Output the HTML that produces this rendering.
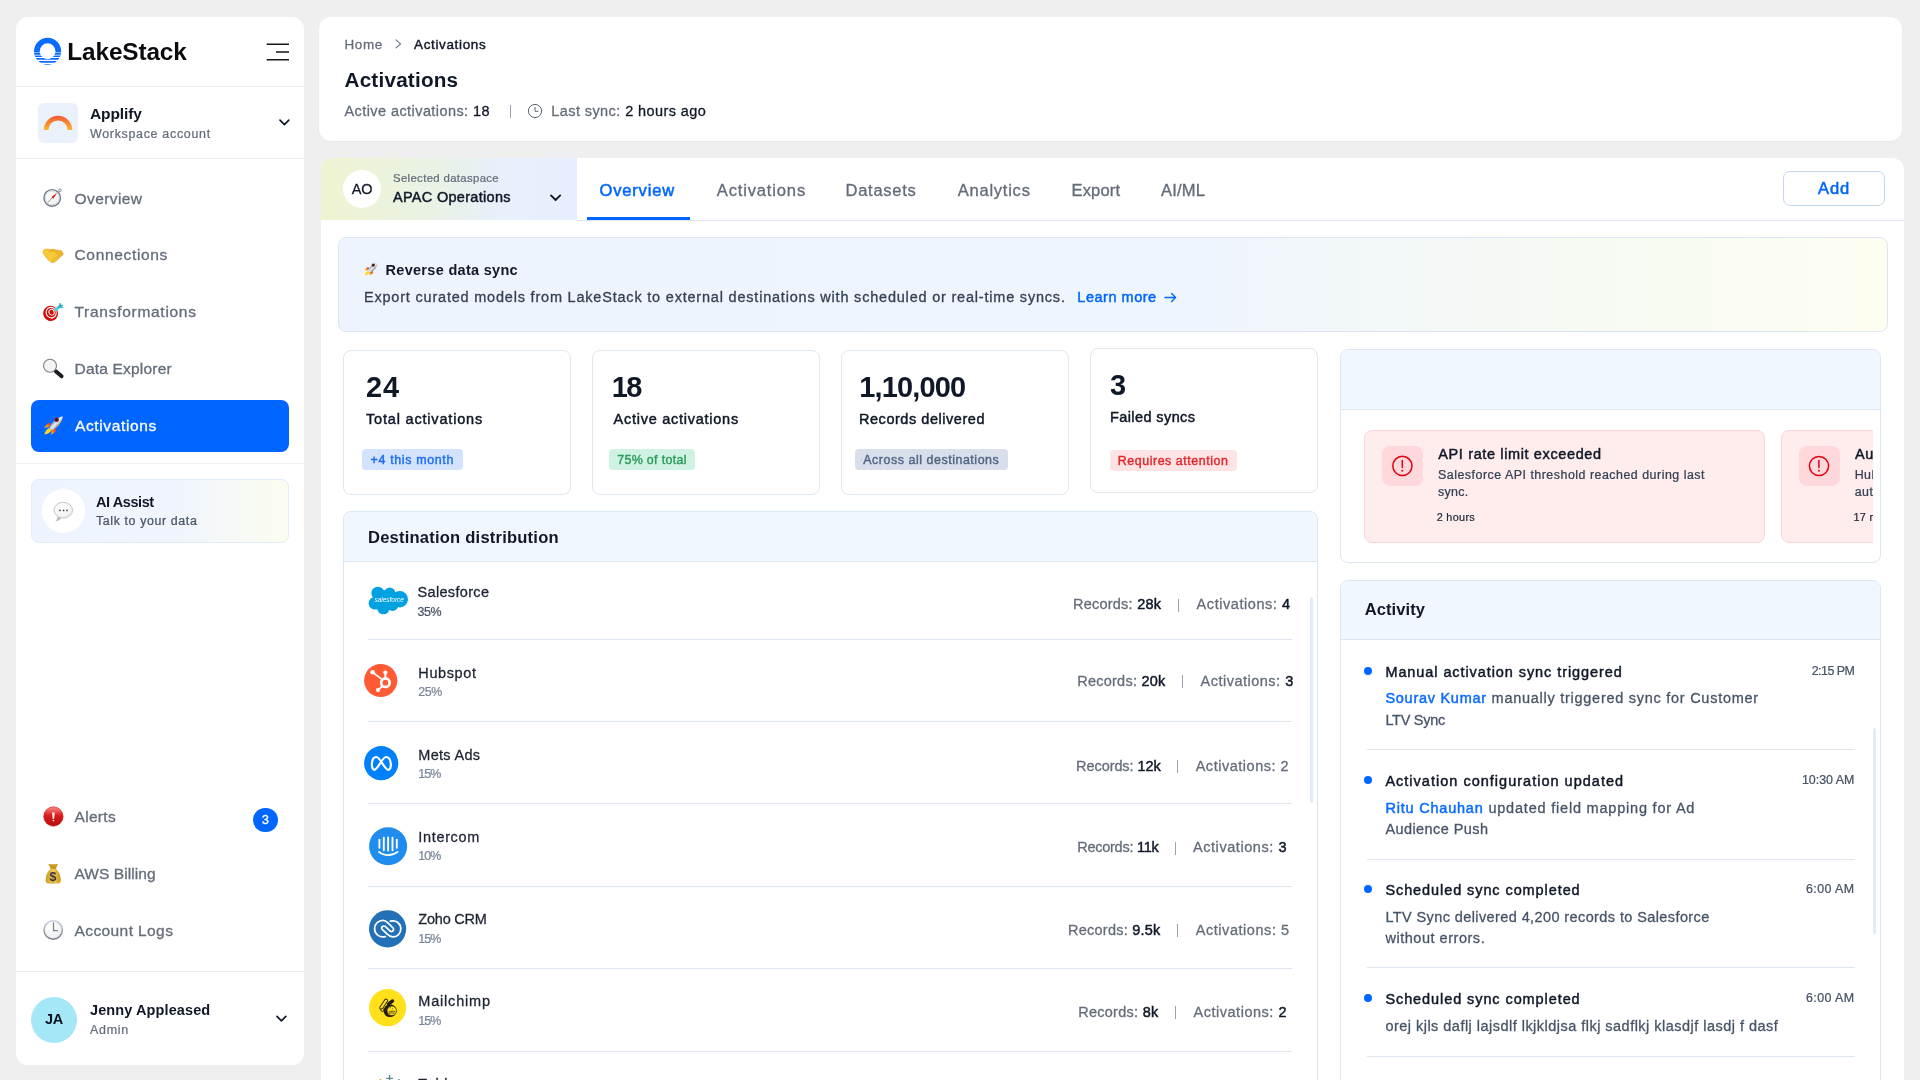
<!DOCTYPE html>
<html lang="en"><head><meta charset="utf-8"><title>Activations - LakeStack</title>
<style>
html,body{margin:0;padding:0;}
body{width:1920px;height:1080px;overflow:hidden;background:#efefef;font-family:"Liberation Sans",sans-serif;}
#root{will-change:transform;position:relative;width:1920px;height:1080px;overflow:hidden;}
.a{position:absolute;}
.t{white-space:nowrap;}
svg{display:block;overflow:visible;}

</style></head>
<body>
<div id="root">
<div class="a" style="left:16px;top:17px;width:288px;height:1048px;background:#fff;border-radius:12px;"></div>
<svg class="a" style="left:33px;top:37px;" width="30" height="30" viewBox="0 0 30 30"><defs><clipPath id="lk"><rect x="0" y="0" width="30" height="14.9"/><rect x="0" y="15.9" width="30" height="1.7"/><rect x="0" y="19" width="30" height="0.9"/><rect x="0" y="21.1" width="30" height="1.7"/><rect x="0" y="24" width="30" height="1.7"/><rect x="0" y="27" width="30" height="1"/></clipPath>
<clipPath id="lk2"><rect x="0" y="14.9" width="30" height="5"/></clipPath></defs>
<path id="lkr" clip-path="url(#lk2)" fill-rule="evenodd" fill="#0a6cff" opacity="0.5" d="M14.6 0.7a13.55 13.55 0 1 0 0 27.1a13.55 13.55 0 1 0 0-27.1zM14.6 6.35a7.9 7.9 0 1 1 0 15.8a7.9 7.9 0 1 1 0-15.8z"/>
<path clip-path="url(#lk)" fill-rule="evenodd" fill="#0a6cff" d="M14.6 0.7a13.55 13.55 0 1 0 0 27.1a13.55 13.55 0 1 0 0-27.1zM14.6 6.35a7.9 7.9 0 1 1 0 15.8a7.9 7.9 0 1 1 0-15.8z"/></svg>
<svg class="a" style="left:266px;top:42px;" width="24" height="20" viewBox="0 0 24 20"><path d="M0.7 2.2H23M10 10H23M0.7 17.7H23" stroke="#14161c" stroke-width="1.6" fill="none"/></svg>
<div class="a" style="left:16px;top:86px;width:288px;height:1px;background:#ededed;"></div>
<div class="a" style="left:38px;top:103px;width:40px;height:40px;background:#eaf1fb;border-radius:6px;"></div>
<svg class="a" style="left:38px;top:103px;" width="40" height="40" viewBox="0 0 40 40"><defs><linearGradient id="ag" x1="0" y1="0" x2="0" y2="1"><stop offset="0" stop-color="#f0593a"/><stop offset="1" stop-color="#fdb52a"/></linearGradient></defs>
<path d="M5.8 27a14.2 14.2 0 0 1 28.4 0h-4.6a9.6 9.6 0 0 0-19.2 0z" fill="url(#ag)"/></svg>
<svg class="a" style="left:279px;top:119px;" width="11" height="7" viewBox="0 0 11 7"><path d="M1 1.2L5.4 5.6L9.8 1.2" stroke="#101828" stroke-width="1.7" fill="none" stroke-linecap="round" stroke-linejoin="round"/></svg>
<div class="a" style="left:16px;top:158px;width:288px;height:1px;background:#ededed;"></div>
<div class="a" style="left:31px;top:400px;width:258px;height:52px;background:#0066ff;border-radius:8px;"></div>
<div class="a" style="left:16px;top:463px;width:288px;height:1px;background:#f0f0f0;"></div>
<div class="a" style="left:31px;top:479px;width:258px;height:64px;border-radius:8px;border:1px solid #e1ecfb;box-sizing:border-box;background:linear-gradient(90deg,#eef4ff 0%,#f0f5fd 55%,#fbfdf0 100%);"></div>
<div class="a" style="left:41.7px;top:489.2px;width:43.8px;height:43.8px;background:#fff;border-radius:22px;"></div>
<div class="a" style="left:253.4px;top:808px;width:24.2px;height:24.2px;background:#0066ff;border-radius:13px;"></div>
<div class="a" style="left:16px;top:971px;width:288px;height:1px;background:#ededed;"></div>
<div class="a" style="left:31px;top:996.5px;width:46px;height:46px;background:#a6e7f7;border-radius:23px;"></div>
<svg class="a" style="left:276px;top:1015px;" width="11" height="8" viewBox="0 0 11 8"><path d="M1 1.4L5.4 5.8L9.8 1.4" stroke="#101828" stroke-width="1.7" fill="none" stroke-linecap="round" stroke-linejoin="round"/></svg>
<div class="a" style="left:319px;top:17px;width:1583px;height:124px;background:#fff;border-radius:12px;box-shadow:0 1px 2px rgba(0,0,0,0.04);"></div>
<svg class="a" style="left:395px;top:39px;" width="7" height="10" viewBox="0 0 7 10"><path d="M1 0.8L5.6 4.8L1 8.8" stroke="#667085" stroke-width="1.1" fill="none" stroke-linecap="round" stroke-linejoin="round"/></svg>
<div class="a" style="left:509.5px;top:105px;width:1px;height:13px;background:#98a2b3;"></div>
<svg class="a" style="left:527px;top:103px;" width="16" height="16" viewBox="0 0 16 16"><circle cx="8" cy="8" r="6.6" stroke="#5b6472" stroke-width="1" fill="none"/><path d="M8 4.4V8.3H11" stroke="#5b6472" stroke-width="1" fill="none" stroke-linecap="round" stroke-linejoin="round"/></svg>
<div class="a" style="left:321px;top:157.5px;width:1583px;height:940px;background:#fff;border-radius:12px;"></div>
<div class="a" style="left:321px;top:157.5px;width:255.5px;height:62px;border-radius:12px 0 0 0;background:linear-gradient(90deg,#eef4d0 0%,#eaf2e6 45%,#e7f0fb 70%,#e6effe 100%);"></div>
<div class="a" style="left:343px;top:170px;width:38px;height:38px;background:#fff;border-radius:19px;"></div>
<svg class="a" style="left:550px;top:193.5px;" width="12" height="8" viewBox="0 0 12 8"><path d="M1 1.4L5.6 6L10.2 1.4" stroke="#101828" stroke-width="1.8" fill="none" stroke-linecap="round" stroke-linejoin="round"/></svg>
<div class="a" style="left:576.5px;top:220px;width:1327.5px;height:1px;background:#dde5ee;"></div>
<div class="a" style="left:587px;top:217px;width:102.7px;height:3.3px;background:#0066ff;"></div>
<div class="a" style="left:1783px;top:170.5px;width:101.5px;height:35px;background:#fff;border-radius:7px;border:1px solid #c5d6f2;box-sizing:border-box;"></div>
<div class="a" style="left:338px;top:237px;width:1549.5px;height:94.5px;border-radius:8px;border:1px solid #dbe6f7;box-sizing:border-box;background:linear-gradient(90deg,#eef4fe 0%,#eff5fd 55%,#f6faf3 80%,#fdfef0 100%);"></div>
<svg class="a" style="left:1164px;top:292px;" width="13" height="11" viewBox="0 0 13 11"><path d="M1 5.5H11.4M7.6 1.6L11.6 5.5L7.6 9.4" stroke="#0066ff" stroke-width="1.4" fill="none" stroke-linecap="round" stroke-linejoin="round"/></svg>
<div class="a" style="left:343px;top:349.5px;width:227.5px;height:145px;background:#fff;border-radius:8px;border:1px solid #dfe7ef;box-sizing:border-box;"></div>
<div class="a" style="left:361.8px;top:449px;width:101px;height:21.4px;background:#d3e3fd;border-radius:4px;"></div>
<div class="a" style="left:592px;top:349.5px;width:227.5px;height:145px;background:#fff;border-radius:8px;border:1px solid #dfe7ef;box-sizing:border-box;"></div>
<div class="a" style="left:609.2px;top:449px;width:86px;height:21.4px;background:#d0f2e3;border-radius:4px;"></div>
<div class="a" style="left:841px;top:349.5px;width:227.5px;height:145px;background:#fff;border-radius:8px;border:1px solid #dfe7ef;box-sizing:border-box;"></div>
<div class="a" style="left:854.7px;top:449px;width:153.2px;height:21.4px;background:#d8dfea;border-radius:4px;"></div>
<div class="a" style="left:1090px;top:348px;width:227.5px;height:145px;background:#fff;border-radius:8px;border:1px solid #dfe7ef;box-sizing:border-box;"></div>
<div class="a" style="left:1110px;top:450.2px;width:126.8px;height:21px;background:#fde3e3;border-radius:4px;"></div>
<div class="a" style="left:343px;top:511px;width:975px;height:620px;background:#fff;border-radius:8px;border:1px solid #dbe6f1;box-sizing:border-box;"></div>
<div class="a" style="left:344px;top:512px;width:973px;height:48.5px;background:#f1f7fe;border-radius:7px 7px 0 0;"></div>
<div class="a" style="left:344px;top:560.5px;width:973px;height:1px;background:#dbe6f1;"></div>
<div class="a" style="left:1309.5px;top:597px;width:3.3px;height:206px;background:#e3ecf6;border-radius:2px;"></div>
<div class="a" style="left:1177.7px;top:598.6px;width:1px;height:13px;background:#98a2b3;"></div>
<div class="a" style="left:368px;top:639px;width:923.5px;height:1px;background:#dde6ef;"></div>
<div class="a" style="left:1182.0px;top:675px;width:1px;height:13px;background:#98a2b3;"></div>
<div class="a" style="left:368px;top:721px;width:923.5px;height:1px;background:#dde6ef;"></div>
<div class="a" style="left:1176.5px;top:759.7px;width:1px;height:13px;background:#98a2b3;"></div>
<div class="a" style="left:368px;top:803.3px;width:923.5px;height:1px;background:#dde6ef;"></div>
<div class="a" style="left:1175.0px;top:841.5px;width:1px;height:13px;background:#98a2b3;"></div>
<div class="a" style="left:368px;top:885.8px;width:923.5px;height:1px;background:#dde6ef;"></div>
<div class="a" style="left:1176.5px;top:924px;width:1px;height:13px;background:#98a2b3;"></div>
<div class="a" style="left:368px;top:968px;width:923.5px;height:1px;background:#dde6ef;"></div>
<div class="a" style="left:1175.0px;top:1006.2px;width:1px;height:13px;background:#98a2b3;"></div>
<div class="a" style="left:368px;top:1050.8px;width:923.5px;height:1px;background:#dde6ef;"></div>
<div class="a" style="left:1340px;top:349px;width:540.5px;height:214px;background:#fff;border-radius:8px;border:1px solid #dbe6f1;box-sizing:border-box;"></div>
<div class="a" style="left:1341px;top:350px;width:538.5px;height:58.5px;background:#f1f7fe;border-radius:7px 7px 0 0;"></div>
<div class="a" style="left:1341px;top:408.5px;width:538.5px;height:1px;background:#dbe6f1;"></div>
<div class="a" style="left:1364px;top:429.5px;width:400.5px;height:113px;background:#ffeded;border-radius:8px;border:1px solid #fdd5d7;box-sizing:border-box;"></div>
<div class="a" style="left:1382px;top:445.5px;width:40.5px;height:40.5px;background:#ffd8dc;border-radius:8px;"></div>
<div class="a" style="left:1781px;top:429.5px;width:92px;height:113px;overflow:hidden;"><div class="a" style="left:0;top:0;width:400px;height:113px;background:#ffeded;border:1px solid #fdd5d7;border-radius:8px;box-sizing:border-box;"></div><div class="a" style="left:18px;top:16px;width:40.5px;height:40.5px;background:#ffd8dc;border-radius:8px;"></div><svg class="a" style="left:26px;top:24.5px" width="24" height="24" viewBox="0 0 24 24"><g stroke="#e3000f" stroke-width="1.5" fill="none" stroke-linecap="round"><circle cx="12" cy="12" r="9.6"/><path d="M11.9 6.5V13.6"/><path d="M11.9 16.7v0.1" stroke-width="1.9"/></g></svg></div>
<div class="a" style="left:1340px;top:580px;width:540.5px;height:560px;background:#fff;border-radius:8px;border:1px solid #dbe6f1;box-sizing:border-box;"></div>
<div class="a" style="left:1341px;top:581px;width:538.5px;height:58px;background:#f1f7fe;border-radius:7px 7px 0 0;"></div>
<div class="a" style="left:1341px;top:639px;width:538.5px;height:1px;background:#dbe6f1;"></div>
<div class="a" style="left:1872.8px;top:727.5px;width:3.4px;height:206.5px;background:#e3ecf6;border-radius:2px;"></div>
<div class="a" style="left:1364px;top:666.7px;width:8px;height:8px;background:#0066ff;border-radius:4px;"></div>
<div class="a" style="left:1366.5px;top:749.3px;width:488px;height:1px;background:#dde6ef;"></div>
<div class="a" style="left:1364px;top:775.7px;width:8px;height:8px;background:#0066ff;border-radius:4px;"></div>
<div class="a" style="left:1366.5px;top:859px;width:488px;height:1px;background:#dde6ef;"></div>
<div class="a" style="left:1364px;top:884.9px;width:8px;height:8px;background:#0066ff;border-radius:4px;"></div>
<div class="a" style="left:1366.5px;top:967px;width:488px;height:1px;background:#dde6ef;"></div>
<div class="a" style="left:1364px;top:993.7px;width:8px;height:8px;background:#0066ff;border-radius:4px;"></div>
<div class="a" style="left:1366.5px;top:1055.7px;width:488px;height:1px;background:#dde6ef;"></div>
<svg class="a" style="left:0;top:0" width="1920" height="1080" viewBox="0 0 1920 1080"><defs>
<radialGradient id="gw" cx="0.4" cy="0.35" r="0.75"><stop offset="0" stop-color="#ffffff"/><stop offset="0.7" stop-color="#f1f2f3"/><stop offset="1" stop-color="#d9dbde"/></radialGradient>
<linearGradient id="grim" x1="0" y1="0" x2="0" y2="1"><stop offset="0" stop-color="#c3cedb"/><stop offset="1" stop-color="#7b7f85"/></linearGradient>
<linearGradient id="gred" x1="0" y1="0" x2="0" y2="1"><stop offset="0" stop-color="#f98d8d"/><stop offset="0.45" stop-color="#dc1b1b"/><stop offset="1" stop-color="#b31010"/></linearGradient>
<linearGradient id="ggold" x1="0" y1="0" x2="1" y2="0"><stop offset="0" stop-color="#c9961a"/><stop offset="0.5" stop-color="#efcf52"/><stop offset="1" stop-color="#c9961a"/></linearGradient>
<linearGradient id="gfl" x1="1" y1="0" x2="0" y2="1"><stop offset="0" stop-color="#f01808"/><stop offset="1" stop-color="#ffd21e"/></linearGradient>
<linearGradient id="grk" x1="0" y1="0" x2="1" y2="1"><stop offset="0.3" stop-color="#3f86cc"/><stop offset="0.5" stop-color="#f2f5f7"/><stop offset="0.7" stop-color="#7d7d79"/></linearGradient>
</defs>
<g><circle cx="59.9" cy="190.3" r="1.3" fill="#fff" stroke="#7d8794" stroke-width="0.9"/>
<circle cx="52.2" cy="197.9" r="8.3" fill="url(#gw)" stroke="#6f7987" stroke-width="1.4"/><circle cx="52.2" cy="197.9" r="6.9" fill="none" stroke="#d3d7dc" stroke-width="0.8"/>
<path d="M52.4 197.8L48 202.3" stroke="#777" stroke-width="0.8"/>
<path d="M51.5 197L57 192.8L53.4 198.7z" fill="#ee1111"/></g>
<g stroke-linejoin="round"><path d="M52.6 249L59.8 250.7L60.8 250L63.3 253.6L62.8 255L60.4 256.8L57 260.2L50.5 253.2z" fill="#eeb52a" stroke="#d99a1c" stroke-width="0.5"/>
<path d="M43.4 250.2L45.3 249.1L51 249.2L53.4 250.4L59.2 256.4L58.8 258.4L55.2 262L51.6 262.8L47.4 259.2L44 254.4L42.9 253z" fill="#f7c938" stroke="#e0a21c" stroke-width="0.5"/>
<path d="M49.2 251.6C50.4 250.6 52 250.4 53 251.2" stroke="#c98a14" stroke-width="0.7" fill="none"/>
<path d="M54.6 257.4l1.7 1.7M53 258.8l1.6 1.6M56 255.8l1.8 1.8M51.4 260l1.4 1.4" stroke="#d4951a" stroke-width="0.65" fill="none" stroke-linecap="round"/></g>
<g><ellipse cx="50.6" cy="313.3" rx="7.4" ry="7.6" fill="#cf0c0c" transform="rotate(-25 50.6 313.3)"/>
<ellipse cx="51.2" cy="312.6" rx="5" ry="5.3" fill="none" stroke="#fff" stroke-width="1.1" transform="rotate(-25 51.2 312.6)"/>
<ellipse cx="51.6" cy="312.2" rx="2.6" ry="2.9" fill="none" stroke="#fff" stroke-width="0.9" transform="rotate(-25 51.6 312.2)"/>
<path d="M53 311.6L55.6 309.6" stroke="#e8c21a" stroke-width="1"/>
<path d="M55.6 309.9L59 307" stroke="#4fd0de" stroke-width="2.8" stroke-linecap="round"/><path d="M58 307.6L59.6 303L61.2 303.6L61 305.2L62.8 304.6L63 306.2L61.6 306.4L64 307.4L60.4 308.2z" fill="#35b3c6"/></g>
<g><path d="M55.8 371.3L61.6 376.3" stroke="#1b1d22" stroke-width="4" stroke-linecap="round"/>
<circle cx="50" cy="365.7" r="6.5" fill="#f4f4f4" stroke="#7c7f84" stroke-width="1.1"/></g>
<g><path d="M44 427.6L48 423L51 423.2L49.2 427.2z" fill="url(#gfl)"/>
<path d="M51.2 428.4L55.6 428.2L56 431.3L51.5 434.8z" fill="url(#gfl)"/>
<path d="M44.5 434.6C45 431.4 46.6 429 49.3 428L51.4 430C50.4 432.6 47.8 434.2 44.5 434.6z" fill="#ffd62a"/>
<path d="M49.6 428.2C50.4 423.6 55.6 417.4 62.7 416.3C62.6 422 57.4 428.6 52.4 430.2z" fill="url(#grk)"/>
<circle cx="56.6" cy="419.8" r="2" fill="#1b2027" stroke="#c81e1e" stroke-width="0.8"/></g>
<g><path d="M57.6 516.5C57.3 518.8 56.6 520.3 55.4 521.4C58 520.9 60 519.8 61.4 518z" fill="#b9b9b9"/>
<ellipse cx="63.3" cy="510.2" rx="9.3" ry="8" fill="url(#gw)" stroke="#c2c2c2" stroke-width="0.9"/>
<circle cx="60" cy="510.4" r="0.85" fill="#444"/><circle cx="63.6" cy="510.4" r="0.85" fill="#444"/><circle cx="67" cy="510.4" r="0.85" fill="#444"/></g>
<g><circle cx="53.4" cy="816.5" r="9.7" fill="url(#gred)" stroke="#c21414" stroke-width="0.6"/>
<path d="M52 812.6h2.8l-0.7 6.4h-1.4z" fill="#f3f3f3"/><path d="M52.3 820.1h2.2l-1.1 1.6z" fill="#f3f3f3"/></g>
<g><path d="M48.2 863.7C50.6 864.6 55.4 864.6 57.9 863.7C57.2 865.8 56.3 867.6 56 869.4L50.6 869.4C50.4 867.6 49.2 865.8 48.2 863.7z" fill="#c99a1f"/>
<path d="M50.4 869.3C47.4 871.4 45.6 876 45.7 881C45.8 883.2 47.6 883.7 53.2 883.7C58.8 883.7 60.6 883.2 60.7 881C60.8 876 59 871.4 56.2 869.3z" fill="url(#ggold)"/></g>
<g><circle cx="53.2" cy="930" r="9.2" fill="url(#gw)" stroke="url(#grim)" stroke-width="1.5"/>
<path d="M53.5 922.6V930.6H57.9" stroke="#7b7f86" stroke-width="1.2" fill="none"/></g>
<g transform="translate(364.3 262.6) scale(0.70) translate(-43.8 -416.2)"><path d="M44 427.6L48 423L51 423.2L49.2 427.2z" fill="url(#gfl)"/>
<path d="M51.2 428.4L55.6 428.2L56 431.3L51.5 434.8z" fill="url(#gfl)"/>
<path d="M44.5 434.6C45 431.4 46.6 429 49.3 428L51.4 430C50.4 432.6 47.8 434.2 44.5 434.6z" fill="#ffd62a"/>
<path d="M49.6 428.2C50.4 423.6 55.6 417.4 62.7 416.3C62.6 422 57.4 428.6 52.4 430.2z" fill="url(#grk)"/>
<circle cx="56.6" cy="419.8" r="2" fill="#1b2027" stroke="#c81e1e" stroke-width="0.8"/></g>
<g stroke="#e3000f" stroke-width="1.5" fill="none" stroke-linecap="round"><circle cx="1402.4" cy="465.9" r="9.6"/><path d="M1402.3 460.4V467.5"/><path d="M1402.3 470.6v0.1" stroke-width="1.9"/></g>
<g fill="#00a1e0"><circle cx="377.9" cy="593.2" r="6.5"/><circle cx="389.8" cy="593.2" r="5.6"/><circle cx="399.8" cy="599.2" r="8.2"/><circle cx="375" cy="603.2" r="6.3"/><circle cx="383.4" cy="608" r="6.3"/><circle cx="392.6" cy="605.4" r="5.5"/><rect x="376" y="594" width="22" height="12"/><rect x="380" y="590.2" width="8" height="6"/><rect x="393" y="592.4" width="4" height="5"/></g>
<text x="389.2" y="601.7" text-anchor="middle" font-family="Liberation Sans, sans-serif" font-style="italic" font-size="6.6" fill="#fff" textLength="29.5" lengthAdjust="spacingAndGlyphs">salesforce</text>
<g><circle cx="380.7" cy="680.5" r="16.6" fill="#ff5a34"/>
<g stroke="#fff" fill="none"><circle cx="385.4" cy="682.7" r="4.25" stroke-width="2.7"/><path d="M385.4 678V673" stroke-width="2"/><path d="M382 679.4L373 672.6" stroke-width="1.7"/><path d="M382.4 686.2L378.2 689.9" stroke-width="1.7"/></g>
<circle cx="385.4" cy="672.6" r="2.1" fill="#fff"/><circle cx="372.6" cy="672.2" r="2.3" fill="#fff"/><circle cx="378" cy="690.1" r="2.1" fill="#fff"/></g>
<g><circle cx="381.2" cy="763.2" r="17.1" fill="#0081fb"/>
<path d="M374.3 769.8C370.8 769.8 370.8 757 376.4 757C380.1 757 384.8 769.8 388.3 769.8C392.2 769.8 391.8 757 385.9 757C382.4 757 377.8 769.8 374.3 769.8z" stroke="#fff" stroke-width="2.2" fill="none" stroke-linejoin="round"/></g>
<g><circle cx="388.1" cy="846.2" r="19" fill="#1f8ded"/>
<g stroke="#fff" stroke-width="1.9" stroke-linecap="round" fill="none"><path d="M379.4 839.6V847.8M383.8 837.6V850.2M388.1 837.4V850.6M392.5 837.6V850.2M396.8 839.6V847.8"/><path d="M378.9 851.9C384 856.1 392.4 856.1 397.6 851.9" stroke-width="1.7"/></g></g>
<g><circle cx="387.6" cy="928.8" r="18.6" fill="#2270b5"/>
<g transform="translate(360 907) scale(0.0389)" stroke="#fff" stroke-width="45" fill="none" stroke-linecap="round" stroke-linejoin="round">
<path d="M650 762C500 800 375 690 375 560C375 430 480 345 590 345C660 345 690 380 730 420L850 540C880 575 850 630 810 630C785 630 770 615 755 600L640 490"/>
<path d="M780 365C930 320 1050 430 1050 560C1050 690 950 770 840 770C770 770 740 740 700 700L570 575C540 540 560 490 605 490"/></g></g>
<g><circle cx="387.6" cy="1007.7" r="18.6" fill="#ffe01b"/>
<g transform="translate(360 986) scale(0.0389)">
<path d="M545 560L670 375" stroke="#241c15" stroke-width="100" stroke-linecap="round"/><path d="M545 560L670 375" stroke="#ffe01b" stroke-width="56" stroke-linecap="round"/>
<circle cx="770" cy="635" r="165" fill="#241c15"/>
<path d="M730 465L838 382" stroke="#241c15" stroke-width="84" stroke-linecap="round"/>
<circle cx="575" cy="615" r="40" fill="#ffe01b" stroke="#241c15" stroke-width="24"/>
<circle cx="818" cy="637" r="122" fill="#ffe01b" stroke="#241c15" stroke-width="16"/>
<path d="M735 668C790 642 860 642 905 662M745 700C800 690 850 692 890 700" stroke="#241c15" stroke-width="18" fill="none"/>
<circle cx="775" cy="562" r="13" fill="#241c15"/><circle cx="842" cy="576" r="11" fill="#241c15"/></g></g>
<g stroke-linecap="butt" fill="none"><path d="M389.6 1075V1082M386.3 1078.4H393" stroke="#5c8296" stroke-width="1.3"/><path d="M380.4 1079V1086" stroke="#eb9129" stroke-width="1.4"/><path d="M399 1079V1086" stroke="#59879b" stroke-width="1.4"/></g></svg>
<div class="a t" style="top:37px;font-size:24.32px;line-height:29px;letter-spacing:-0.100px;font-weight:700;color:#0b0b0f;left:67.3px;">LakeStack</div>
<div class="a t" style="top:104px;font-size:15.52px;line-height:19px;letter-spacing:-0.125px;font-weight:700;color:#101828;left:90px;">Applify</div>
<div class="a t" style="top:126px;font-size:12.42px;line-height:16px;letter-spacing:0.710px;font-weight:400;-webkit-text-stroke:0.02em;color:#646c7a;left:90px;">Workspace account</div>
<div class="a t" style="top:189px;font-size:15.52px;line-height:19px;letter-spacing:0.416px;font-weight:400;-webkit-text-stroke:0.02em;color:#646c7a;left:74.5px;">Overview</div>
<div class="a t" style="top:245px;font-size:15.52px;line-height:19px;letter-spacing:0.658px;font-weight:400;-webkit-text-stroke:0.02em;color:#646c7a;left:74.5px;">Connections</div>
<div class="a t" style="top:302px;font-size:15.52px;line-height:19px;letter-spacing:0.711px;font-weight:400;-webkit-text-stroke:0.02em;color:#646c7a;left:74.5px;">Transformations</div>
<div class="a t" style="top:359px;font-size:15.52px;line-height:19px;letter-spacing:0.188px;font-weight:400;-webkit-text-stroke:0.02em;color:#646c7a;left:74.5px;">Data Explorer</div>
<div class="a t" style="top:416px;font-size:15.52px;line-height:19px;letter-spacing:0.624px;font-weight:400;-webkit-text-stroke:0.02em;color:#fff;left:75px;">Activations</div>
<div class="a t" style="top:493px;font-size:14.49px;line-height:18px;letter-spacing:-0.406px;font-weight:700;color:#101828;left:96px;">AI Assist</div>
<div class="a t" style="top:513px;font-size:12.42px;line-height:16px;letter-spacing:0.610px;font-weight:400;-webkit-text-stroke:0.02em;color:#475467;left:96px;">Talk to your data</div>
<div class="a t" style="top:807px;font-size:15.52px;line-height:19px;letter-spacing:0.305px;font-weight:400;-webkit-text-stroke:0.02em;color:#646c7a;left:74.5px;">Alerts</div>
<div class="a t" style="top:811px;font-size:12.94px;line-height:17px;letter-spacing:0.159px;font-weight:400;-webkit-text-stroke:0.02em;color:#fff;left:65.5px;width:400px;text-align:center;"><span>3</span></div>
<div class="a t" style="top:864px;font-size:15.52px;line-height:19px;letter-spacing:0.065px;font-weight:400;-webkit-text-stroke:0.02em;color:#646c7a;left:74.5px;">AWS Billing</div>
<div class="a t" style="top:921px;font-size:15.52px;line-height:19px;letter-spacing:0.397px;font-weight:400;-webkit-text-stroke:0.02em;color:#646c7a;left:74.5px;">Account Logs</div>
<div class="a t" style="top:1010px;font-size:14.49px;line-height:18px;letter-spacing:-0.264px;font-weight:700;color:#0b1220;left:-146px;width:400px;text-align:center;"><span>JA</span></div>
<div class="a t" style="top:1001px;font-size:14.49px;line-height:18px;letter-spacing:0.113px;font-weight:700;color:#101828;left:90px;">Jenny Appleased</div>
<div class="a t" style="top:1022px;font-size:12.42px;line-height:16px;letter-spacing:0.726px;font-weight:400;-webkit-text-stroke:0.02em;color:#646c7a;left:90px;">Admin</div>
<div class="a t" style="top:36px;font-size:13.45px;line-height:17px;letter-spacing:0.660px;font-weight:400;-webkit-text-stroke:0.02em;color:#646c7a;left:344.5px;">Home</div>
<div class="a t" style="top:36px;font-size:13.45px;line-height:17px;letter-spacing:0.665px;font-weight:400;-webkit-text-stroke:0.032em;color:#101828;left:414px;">Activations</div>
<div class="a t" style="top:67px;font-size:20.7px;line-height:25px;letter-spacing:0.208px;font-weight:700;color:#101828;left:344.5px;">Activations</div>
<div class="a t" style="top:102px;font-size:14.49px;line-height:18px;letter-spacing:0.428px;left:344.5px;"><span style="font-weight:400;-webkit-text-stroke:0.02em;color:#646c7a">Active activations: </span><span style="font-weight:400;-webkit-text-stroke:0.02em;color:#101828">18</span></div>
<div class="a t" style="top:102px;font-size:14.49px;line-height:18px;letter-spacing:0.420px;left:551.3px;"><span style="font-weight:400;-webkit-text-stroke:0.02em;color:#646c7a">Last sync: </span><span style="font-weight:400;-webkit-text-stroke:0.02em;color:#101828">2 hours ago</span></div>
<div class="a t" style="top:180px;font-size:14.49px;line-height:18px;letter-spacing:-0.249px;font-weight:400;-webkit-text-stroke:0.02em;color:#101828;left:162px;width:400px;text-align:center;"><span>AO</span></div>
<div class="a t" style="top:171px;font-size:11.38px;line-height:14px;letter-spacing:0.338px;font-weight:400;-webkit-text-stroke:0.02em;color:#646c7a;left:393px;">Selected dataspace</div>
<div class="a t" style="top:188px;font-size:14.49px;line-height:18px;letter-spacing:0.303px;font-weight:400;-webkit-text-stroke:0.032em;color:#101828;left:393px;">APAC Operations</div>
<div class="a t" style="top:180px;font-size:16.56px;line-height:21px;letter-spacing:0.816px;font-weight:400;-webkit-text-stroke:0.032em;color:#0066ff;left:599.5px;">Overview</div>
<div class="a t" style="top:180px;font-size:16.56px;line-height:21px;letter-spacing:0.835px;font-weight:400;-webkit-text-stroke:0.02em;color:#646c7a;left:716.8px;">Activations</div>
<div class="a t" style="top:180px;font-size:16.56px;line-height:21px;letter-spacing:0.723px;font-weight:400;-webkit-text-stroke:0.02em;color:#646c7a;left:845.5px;">Datasets</div>
<div class="a t" style="top:180px;font-size:16.56px;line-height:21px;letter-spacing:0.753px;font-weight:400;-webkit-text-stroke:0.02em;color:#646c7a;left:957.7px;">Analytics</div>
<div class="a t" style="top:180px;font-size:16.56px;line-height:21px;letter-spacing:0.145px;font-weight:400;-webkit-text-stroke:0.02em;color:#646c7a;left:1071.5px;">Export</div>
<div class="a t" style="top:180px;font-size:16.56px;line-height:21px;letter-spacing:0.156px;font-weight:400;-webkit-text-stroke:0.02em;color:#646c7a;left:1161px;">AI/ML</div>
<div class="a t" style="top:178px;font-size:16.56px;line-height:21px;letter-spacing:0.849px;font-weight:400;-webkit-text-stroke:0.032em;color:#0066ff;left:1634px;width:400px;text-align:center;"><span>Add</span></div>
<div class="a t" style="top:261px;font-size:14.49px;line-height:18px;letter-spacing:0.310px;font-weight:700;color:#101828;left:385.5px;">Reverse data sync</div>
<div class="a t" style="top:288px;font-size:14.49px;line-height:18px;letter-spacing:0.802px;font-weight:400;-webkit-text-stroke:0.02em;color:#344054;left:364px;">Export curated models from LakeStack to external destinations with scheduled or real-time syncs.</div>
<div class="a t" style="top:288px;font-size:14.49px;line-height:18px;letter-spacing:0.532px;font-weight:400;-webkit-text-stroke:0.032em;color:#0066ff;left:1077.3px;">Learn more</div>
<div class="a t" style="top:370px;font-size:28.98px;line-height:34px;letter-spacing:0.783px;font-weight:700;color:#101828;left:366px;">24</div>
<div class="a t" style="top:410px;font-size:14.49px;line-height:18px;letter-spacing:0.820px;font-weight:400;-webkit-text-stroke:0.032em;color:#101828;left:366px;">Total activations</div>
<div class="a t" style="top:452px;font-size:12.42px;line-height:16px;letter-spacing:0.659px;font-weight:400;-webkit-text-stroke:0.032em;color:#1a6bf5;left:370.6px;">+4 this month</div>
<div class="a t" style="top:370px;font-size:28.98px;line-height:34px;letter-spacing:-1.600px;font-weight:700;color:#101828;left:611.8px;">18</div>
<div class="a t" style="top:410px;font-size:14.49px;line-height:18px;letter-spacing:0.750px;font-weight:400;-webkit-text-stroke:0.032em;color:#101828;left:613.5px;">Active activations</div>
<div class="a t" style="top:452px;font-size:12.42px;line-height:16px;letter-spacing:0.339px;font-weight:400;-webkit-text-stroke:0.032em;color:#2a9a5b;left:617.2px;">75% of total</div>
<div class="a t" style="top:370px;font-size:28.98px;line-height:34px;letter-spacing:-0.821px;font-weight:700;color:#101828;left:859.2px;">1,10,000</div>
<div class="a t" style="top:410px;font-size:14.49px;line-height:18px;letter-spacing:0.544px;font-weight:400;-webkit-text-stroke:0.032em;color:#101828;left:859px;">Records delivered</div>
<div class="a t" style="top:452px;font-size:12.42px;line-height:16px;letter-spacing:0.546px;font-weight:400;-webkit-text-stroke:0.032em;color:#4f6283;left:863.3px;">Across all destinations</div>
<div class="a t" style="top:368px;font-size:28.98px;line-height:34px;letter-spacing:-0.525px;font-weight:700;color:#101828;left:1110px;">3</div>
<div class="a t" style="top:408px;font-size:14.49px;line-height:18px;letter-spacing:0.408px;font-weight:400;-webkit-text-stroke:0.032em;color:#101828;left:1110px;">Failed syncs</div>
<div class="a t" style="top:453px;font-size:12.42px;line-height:16px;letter-spacing:0.550px;font-weight:400;-webkit-text-stroke:0.032em;color:#e0262d;left:1117.8px;">Requires attention</div>
<div class="a t" style="top:527px;font-size:16.56px;line-height:21px;letter-spacing:0.213px;font-weight:700;color:#101828;left:368px;">Destination distribution</div>
<div class="a t" style="top:583px;font-size:14.49px;line-height:18px;letter-spacing:0.336px;font-weight:400;-webkit-text-stroke:0.02em;color:#1d2433;left:417.5px;">Salesforce</div>
<div class="a t" style="top:604px;font-size:12.42px;line-height:16px;letter-spacing:-0.377px;font-weight:400;-webkit-text-stroke:0.02em;color:#475467;left:417.5px;">35%</div>
<div class="a t" style="top:595px;font-size:14.49px;line-height:18px;letter-spacing:0.238px;left:1073px;"><span style="font-weight:400;-webkit-text-stroke:0.02em;color:#646c7a">Records: </span><span style="font-weight:400;-webkit-text-stroke:0.032em;color:#101828">28k</span></div>
<div class="a t" style="top:595px;font-size:14.49px;line-height:18px;letter-spacing:0.567px;left:1196.6px;"><span style="font-weight:400;-webkit-text-stroke:0.02em;color:#646c7a">Activations: </span><span style="font-weight:400;-webkit-text-stroke:0.032em;color:#101828">4</span></div>
<div class="a t" style="top:664px;font-size:14.49px;line-height:18px;letter-spacing:0.621px;font-weight:400;-webkit-text-stroke:0.02em;color:#1d2433;left:418.3px;">Hubspot</div>
<div class="a t" style="top:684px;font-size:12.42px;line-height:16px;letter-spacing:-0.433px;font-weight:400;-webkit-text-stroke:0.02em;color:#7b8699;left:418.3px;">25%</div>
<div class="a t" style="top:672px;font-size:14.49px;line-height:18px;letter-spacing:0.238px;left:1077.3px;"><span style="font-weight:400;-webkit-text-stroke:0.02em;color:#646c7a">Records: </span><span style="font-weight:400;-webkit-text-stroke:0.032em;color:#101828">20k</span></div>
<div class="a t" style="top:672px;font-size:14.49px;line-height:18px;letter-spacing:0.496px;left:1200.6px;"><span style="font-weight:400;-webkit-text-stroke:0.02em;color:#646c7a">Activations: </span><span style="font-weight:400;-webkit-text-stroke:0.032em;color:#101828">3</span></div>
<div class="a t" style="top:746px;font-size:14.49px;line-height:18px;letter-spacing:0.303px;font-weight:400;-webkit-text-stroke:0.02em;color:#1d2433;left:418.3px;">Mets Ads</div>
<div class="a t" style="top:766px;font-size:12.42px;line-height:16px;letter-spacing:-0.900px;font-weight:400;-webkit-text-stroke:0.02em;color:#7b8699;left:418.3px;">15%</div>
<div class="a t" style="top:757px;font-size:14.49px;line-height:18px;letter-spacing:-0.070px;left:1076.1px;"><span style="font-weight:400;-webkit-text-stroke:0.02em;color:#646c7a">Records: </span><span style="font-weight:400;-webkit-text-stroke:0.032em;color:#101828">12k</span></div>
<div class="a t" style="top:757px;font-size:14.49px;line-height:18px;letter-spacing:0.525px;left:1195.7px;"><span style="font-weight:400;-webkit-text-stroke:0.02em;color:#646c7a">Activations: </span><span style="font-weight:400;-webkit-text-stroke:0.02em;color:#646c7a">2</span></div>
<div class="a t" style="top:828px;font-size:14.49px;line-height:18px;letter-spacing:0.668px;font-weight:400;-webkit-text-stroke:0.02em;color:#1d2433;left:418.3px;">Intercom</div>
<div class="a t" style="top:848px;font-size:12.42px;line-height:16px;letter-spacing:-0.900px;font-weight:400;-webkit-text-stroke:0.02em;color:#7b8699;left:418.3px;">10%</div>
<div class="a t" style="top:838px;font-size:14.49px;line-height:18px;letter-spacing:-0.247px;left:1077.2px;"><span style="font-weight:400;-webkit-text-stroke:0.02em;color:#646c7a">Records: </span><span style="font-weight:400;-webkit-text-stroke:0.032em;color:#101828">11k</span></div>
<div class="a t" style="top:838px;font-size:14.49px;line-height:18px;letter-spacing:0.560px;left:1193px;"><span style="font-weight:400;-webkit-text-stroke:0.02em;color:#646c7a">Activations: </span><span style="font-weight:400;-webkit-text-stroke:0.032em;color:#101828">3</span></div>
<div class="a t" style="top:910px;font-size:14.49px;line-height:18px;letter-spacing:-0.204px;font-weight:400;-webkit-text-stroke:0.02em;color:#1d2433;left:418.3px;">Zoho CRM</div>
<div class="a t" style="top:931px;font-size:12.42px;line-height:16px;letter-spacing:-0.900px;font-weight:400;-webkit-text-stroke:0.02em;color:#7b8699;left:418.3px;">15%</div>
<div class="a t" style="top:921px;font-size:14.49px;line-height:18px;letter-spacing:0.240px;left:1068.1px;"><span style="font-weight:400;-webkit-text-stroke:0.02em;color:#646c7a">Records: </span><span style="font-weight:400;-webkit-text-stroke:0.032em;color:#101828">9.5k</span></div>
<div class="a t" style="top:921px;font-size:14.49px;line-height:18px;letter-spacing:0.560px;left:1195.7px;"><span style="font-weight:400;-webkit-text-stroke:0.02em;color:#646c7a">Activations: </span><span style="font-weight:400;-webkit-text-stroke:0.02em;color:#646c7a">5</span></div>
<div class="a t" style="top:992px;font-size:14.49px;line-height:18px;letter-spacing:0.811px;font-weight:400;-webkit-text-stroke:0.02em;color:#1d2433;left:418.3px;">Mailchimp</div>
<div class="a t" style="top:1013px;font-size:12.42px;line-height:16px;letter-spacing:-0.900px;font-weight:400;-webkit-text-stroke:0.02em;color:#7b8699;left:418.3px;">15%</div>
<div class="a t" style="top:1003px;font-size:14.49px;line-height:18px;letter-spacing:0.273px;left:1078.2px;"><span style="font-weight:400;-webkit-text-stroke:0.02em;color:#646c7a">Records: </span><span style="font-weight:400;-webkit-text-stroke:0.032em;color:#101828">8k</span></div>
<div class="a t" style="top:1003px;font-size:14.49px;line-height:18px;letter-spacing:0.525px;left:1193.5px;"><span style="font-weight:400;-webkit-text-stroke:0.02em;color:#646c7a">Activations: </span><span style="font-weight:400;-webkit-text-stroke:0.032em;color:#101828">2</span></div>
<div class="a t" style="top:1075px;font-size:14.49px;line-height:18px;letter-spacing:0.900px;font-weight:400;-webkit-text-stroke:0.02em;color:#1d2433;left:418.3px;">Tableau</div>
<div class="a t" style="top:445px;font-size:14.49px;line-height:18px;letter-spacing:0.628px;font-weight:400;-webkit-text-stroke:0.032em;color:#101828;left:1438.3px;">API rate limit exceeded</div>
<div class="a t" style="top:467px;font-size:12.42px;line-height:16px;letter-spacing:0.504px;font-weight:400;-webkit-text-stroke:0.02em;color:#344054;left:1438px;">Salesforce API threshold reached during last</div>
<div class="a t" style="top:484px;font-size:12.42px;line-height:16px;letter-spacing:0.307px;font-weight:400;-webkit-text-stroke:0.02em;color:#344054;left:1438px;">sync.</div>
<div class="a t" style="top:510px;font-size:10.87px;line-height:14px;letter-spacing:0.309px;font-weight:400;-webkit-text-stroke:0.02em;color:#1d2433;left:1436.7px;">2 hours</div>
<div class="a t" style="top:445px;font-size:14.49px;line-height:18px;letter-spacing:0.630px;font-weight:400;-webkit-text-stroke:0.032em;color:#101828;left:1855px;width:18px;overflow:hidden;">Authentication failed</div>
<div class="a t" style="top:467px;font-size:12.42px;line-height:16px;letter-spacing:0.450px;font-weight:400;-webkit-text-stroke:0.02em;color:#344054;left:1854.7px;width:18.3px;overflow:hidden;">Hubspot connection requires re-</div>
<div class="a t" style="top:484px;font-size:12.42px;line-height:16px;letter-spacing:0.450px;font-weight:400;-webkit-text-stroke:0.02em;color:#344054;left:1854.7px;width:18.3px;overflow:hidden;">authentication.</div>
<div class="a t" style="top:510px;font-size:10.87px;line-height:14px;letter-spacing:0.310px;font-weight:400;-webkit-text-stroke:0.02em;color:#1d2433;left:1853.5px;width:19.5px;overflow:hidden;">17 min</div>
<div class="a t" style="top:599px;font-size:16.56px;line-height:21px;letter-spacing:0.065px;font-weight:700;color:#101828;left:1364.7px;">Activity</div>
<div class="a t" style="top:663px;font-size:14.49px;line-height:18px;letter-spacing:0.924px;font-weight:400;-webkit-text-stroke:0.032em;color:#101828;left:1385.4px;">Manual activation sync triggered</div>
<div class="a t" style="top:663px;font-size:12.42px;line-height:16px;letter-spacing:-0.500px;font-weight:400;-webkit-text-stroke:0.02em;color:#475467;right:65.59999999999991px;">2:15 PM</div>
<div class="a t" style="top:689px;font-size:14.49px;line-height:18px;letter-spacing:0.738px;left:1385.4px;"><span style="font-weight:400;-webkit-text-stroke:0.032em;color:#0b6bff">Sourav Kumar</span><span style="font-weight:400;-webkit-text-stroke:0.02em;color:#475467"> manually triggered sync for Customer</span></div>
<div class="a t" style="top:711px;font-size:14.49px;line-height:18px;letter-spacing:-0.265px;font-weight:400;-webkit-text-stroke:0.02em;color:#475467;left:1385.4px;">LTV Sync</div>
<div class="a t" style="top:772px;font-size:14.49px;line-height:18px;letter-spacing:1.017px;font-weight:400;-webkit-text-stroke:0.032em;color:#101828;left:1385.4px;">Activation configuration updated</div>
<div class="a t" style="top:772px;font-size:12.42px;line-height:16px;letter-spacing:0.010px;font-weight:400;-webkit-text-stroke:0.02em;color:#475467;right:65.59999999999991px;">10:30 AM</div>
<div class="a t" style="top:799px;font-size:14.49px;line-height:18px;letter-spacing:0.800px;left:1385.4px;"><span style="font-weight:400;-webkit-text-stroke:0.032em;color:#0b6bff">Ritu Chauhan</span><span style="font-weight:400;-webkit-text-stroke:0.02em;color:#475467"> updated field mapping for Ad</span></div>
<div class="a t" style="top:820px;font-size:14.49px;line-height:18px;letter-spacing:0.436px;font-weight:400;-webkit-text-stroke:0.02em;color:#475467;left:1385.4px;">Audience Push</div>
<div class="a t" style="top:881px;font-size:14.49px;line-height:18px;letter-spacing:0.920px;font-weight:400;-webkit-text-stroke:0.032em;color:#101828;left:1385.4px;">Scheduled sync completed</div>
<div class="a t" style="top:881px;font-size:12.42px;line-height:16px;letter-spacing:0.410px;font-weight:400;-webkit-text-stroke:0.02em;color:#475467;right:65.59999999999991px;">6:00 AM</div>
<div class="a t" style="top:908px;font-size:14.49px;line-height:18px;letter-spacing:0.405px;font-weight:400;-webkit-text-stroke:0.02em;color:#475467;left:1385.4px;">LTV Sync delivered 4,200 records to Salesforce</div>
<div class="a t" style="top:929px;font-size:14.49px;line-height:18px;letter-spacing:0.536px;font-weight:400;-webkit-text-stroke:0.02em;color:#475467;left:1385.4px;">without errors.</div>
<div class="a t" style="top:990px;font-size:14.49px;line-height:18px;letter-spacing:0.920px;font-weight:400;-webkit-text-stroke:0.032em;color:#101828;left:1385.4px;">Scheduled sync completed</div>
<div class="a t" style="top:990px;font-size:12.42px;line-height:16px;letter-spacing:0.410px;font-weight:400;-webkit-text-stroke:0.02em;color:#475467;right:65.59999999999991px;">6:00 AM</div>
<div class="a t" style="top:1017px;font-size:14.49px;line-height:18px;letter-spacing:0.480px;font-weight:400;-webkit-text-stroke:0.02em;color:#475467;left:1385.4px;">orej kjls daflj lajsdlf lkjkldjsa flkj sadflkj klasdjf lasdj f dasf</div>
<div class="a t" style="top:869px;font-size:12.42px;line-height:16px;letter-spacing:0.941px;font-weight:700;color:#3d3140;left:-146.6px;width:400px;text-align:center;"><span>$</span></div>
</div>
</body></html>
